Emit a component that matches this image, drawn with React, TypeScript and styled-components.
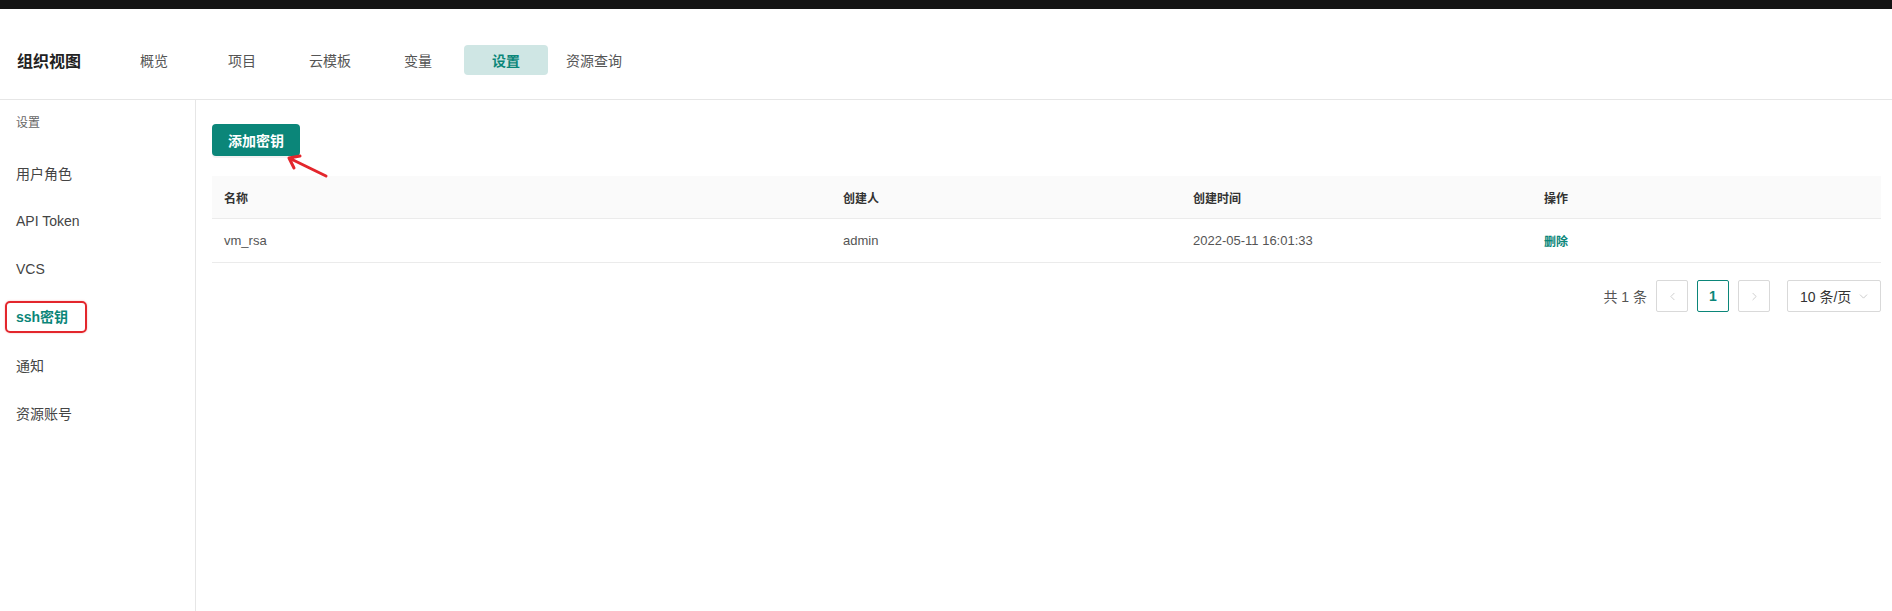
import { ChevronDown, ChevronLeft, ChevronRight } from "lucide-react";
import styled, { createGlobalStyle } from "styled-components";

const PRIMARY = "#0b8679";

const tabs = ["概览", "项目", "云模板", "变量", "设置", "资源查询"];
const menu = ["用户角色", "API Token", "VCS", "ssh密钥", "通知", "资源账号"];

const keys = [
  { name: "vm_rsa", creator: "admin", createdAt: "2022-05-11 16:01:33" },
];

export default function App() {
  return (
    <>
      <GlobalStyle />
      <TopBar />
      <Header>
        <Title>组织视图</Title>
        <Tabs>
          {tabs.map((tab) => (
            <Tab key={tab} $active={tab === "设置"}>
              {tab}
            </Tab>
          ))}
        </Tabs>
      </Header>
      <Body>
        <Sidebar>
          <SidebarLabel>设置</SidebarLabel>
          {menu.map((item) => (
            <MenuItem key={item} $active={item === "ssh密钥"}>
              {item === "ssh密钥" ? <Marked>{item}</Marked> : item}
            </MenuItem>
          ))}
        </Sidebar>
        <Content>
          <ButtonWrap>
            <PrimaryButton>添加密钥</PrimaryButton>
            <Arrow width="50" height="26" viewBox="0 0 50 26">
              <path
                d="M44 22 L7 4 M18 2 L7 4 L12 14"
                fill="none"
                stroke="#e3262c"
                strokeWidth="3"
                strokeLinecap="round"
                strokeLinejoin="round"
              />
            </Arrow>
          </ButtonWrap>
          <Table>
            <HeadRow>
              <Cell>名称</Cell>
              <Cell>创建人</Cell>
              <Cell>创建时间</Cell>
              <Cell>操作</Cell>
            </HeadRow>
            {keys.map((key) => (
              <Row key={key.name}>
                <Cell>{key.name}</Cell>
                <Cell>{key.creator}</Cell>
                <Cell>{key.createdAt}</Cell>
                <Cell>
                  <Action>删除</Action>
                </Cell>
              </Row>
            ))}
          </Table>
          <Pagination>
            <Total>共 1 条</Total>
            <PageItem $disabled>
              <ChevronLeft size={13} strokeWidth={1.5} />
            </PageItem>
            <PageItem $active>1</PageItem>
            <PageItem $disabled>
              <ChevronRight size={13} strokeWidth={1.5} />
            </PageItem>
            <SizeSelect>
              <span>10 条/页</span>
              <ChevronDown size={13} strokeWidth={1.5} color="#bfbfbf" />
            </SizeSelect>
          </Pagination>
        </Content>
      </Body>
    </>
  );
}

const GlobalStyle = createGlobalStyle`
  body {
    margin: 0;
    background: #fff;
    font-family: "Liberation Sans", "Noto Sans CJK SC", sans-serif;
    color: #333;
  }
  * {
    box-sizing: border-box;
  }
`;

const TopBar = styled.div`
  height: 9px;
  background: #151515;
`;

const Header = styled.header`
  display: flex;
  align-items: center;
  height: 91px;
  padding: 12px 0 0 17px;
  border-bottom: 1px solid #e6e6e6;
`;

const Title = styled.h1`
  margin: 0 31px 0 0;
  font-size: 16px;
  font-weight: 700;
  color: #222;
`;

const Tabs = styled.nav`
  display: flex;
  gap: 4px;
`;

const Tab = styled.div<{ $active?: boolean }>`
  display: flex;
  align-items: center;
  justify-content: center;
  width: 84px;
  height: 30px;
  border-radius: 4px;
  font-size: 14px;
  color: ${(p) => (p.$active ? PRIMARY : "#555")};
  font-weight: ${(p) => (p.$active ? 700 : 400)};
  background: ${(p) => (p.$active ? "#cfe6e4" : "transparent")};
`;

const Body = styled.div`
  display: flex;
  min-height: calc(100vh - 100px);
`;

const Sidebar = styled.aside`
  width: 196px;
  flex-shrink: 0;
  border-right: 1px solid #e6e6e6;
`;

const SidebarLabel = styled.div`
  padding: 15px 16px 18px;
  font-size: 12px;
  line-height: 16px;
  color: #666;
`;

const MenuItem = styled.div<{ $active?: boolean }>`
  display: flex;
  align-items: center;
  height: 48px;
  padding-left: 16px;
  font-size: 14px;
  color: ${(p) => (p.$active ? PRIMARY : "#444")};
  font-weight: ${(p) => (p.$active ? 700 : 400)};
`;

const Marked = styled.span`
  position: relative;
  display: inline-block;
  line-height: 16px;

  &::before {
    content: "";
    position: absolute;
    top: -8px;
    bottom: -8px;
    left: -11px;
    right: -19px;
    border: 2px solid #e3262c;
    border-radius: 5px;
    box-shadow: 0 0 2px rgba(227, 38, 44, 0.35);
  }
`;

const Content = styled.main`
  flex: 1;
  padding: 24px 11px 0 16px;
`;

const ButtonWrap = styled.div`
  position: relative;
  width: 88px;
  margin-bottom: 20px;
`;

const PrimaryButton = styled.button`
  display: block;
  width: 88px;
  height: 32px;
  border: none;
  border-radius: 4px;
  background: ${PRIMARY};
  color: #fff;
  font-family: inherit;
  font-size: 14px;
  font-weight: 700;
  box-shadow: 0 2px 0 rgba(0, 0, 0, 0.05);
`;

const Arrow = styled.svg`
  position: absolute;
  left: 70px;
  top: 30px;
`;

const Table = styled.div`
  width: 100%;
  font-size: 13px;
`;

const HeadRow = styled.div`
  display: grid;
  grid-template-columns: 619px 350px 351px 1fr;
  height: 43px;
  align-items: center;
  background: #fafafa;
  border-bottom: 1px solid #ebebeb;
  color: #333;
  font-weight: 700;
  font-size: 12px;
`;

const Row = styled.div`
  display: grid;
  grid-template-columns: 619px 350px 351px 1fr;
  height: 44px;
  align-items: center;
  border-bottom: 1px solid #ebebeb;
  color: #555;
`;

const Cell = styled.div`
  padding: 0 12px;
`;

const Action = styled.span`
  color: ${PRIMARY};
  font-weight: 700;
  font-size: 12px;
`;

const Pagination = styled.div`
  display: flex;
  align-items: center;
  justify-content: flex-end;
  gap: 9px;
  margin-top: 17px;
  font-size: 14px;
`;

const Total = styled.span`
  color: #555;
`;

const PageItem = styled.div<{ $active?: boolean; $disabled?: boolean }>`
  display: flex;
  align-items: center;
  justify-content: center;
  width: 32px;
  height: 32px;
  border: 1px solid ${(p) => (p.$active ? PRIMARY : "#d9d9d9")};
  border-radius: 2px;
  color: ${(p) => (p.$active ? PRIMARY : p.$disabled ? "#c4c4c4" : "#333")};
  font-weight: ${(p) => (p.$active ? 700 : 400)};
`;

const SizeSelect = styled.div`
  display: flex;
  align-items: center;
  justify-content: space-between;
  width: 94px;
  height: 32px;
  margin-left: 8px;
  padding: 0 10px 0 12px;
  border: 1px solid #d9d9d9;
  border-radius: 2px;
  color: #333;
`;
